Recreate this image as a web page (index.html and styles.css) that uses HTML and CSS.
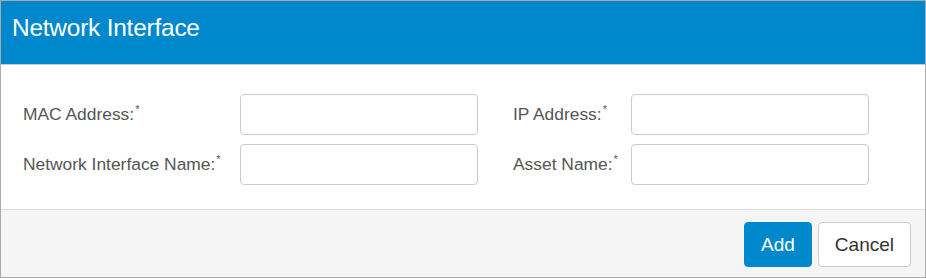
FILE: index.html
```html
<!DOCTYPE html>
<html lang="en">
<head>
<meta charset="UTF-8">
<title>Network Interface</title>
<link rel="stylesheet" href="styles.css">
</head>
<body>
<div class="dialog">
    <div class="dialog-header">
        <h2 class="dialog-title">Network Interface</h2>
    </div>
    <div class="dialog-body">
        <div class="form-grid">
            <label class="field-label" for="mac">MAC Address:<sup>*</sup></label>
            <input class="field-input" type="text" id="mac">
            <label class="field-label second" for="ip">IP Address:<sup>*</sup></label>
            <input class="field-input" type="text" id="ip">
            <label class="field-label" for="nic">Network Interface Name:<sup>*</sup></label>
            <input class="field-input" type="text" id="nic">
            <label class="field-label second" for="asset">Asset Name:<sup>*</sup></label>
            <input class="field-input" type="text" id="asset">
        </div>
    </div>
    <div class="dialog-footer">
        <button class="btn btn-primary">Add</button>
        <button class="btn btn-default">Cancel</button>
    </div>
</div>
</body>
</html>
```

FILE: styles.css
```css
body {
    margin: 0;
    font-family: "Liberation Sans", Arial, sans-serif;
    background-color: #fff;
}
.dialog {
    width: 924px;
    height: 276px;
    border: 1px solid #aaa;
    display: flex;
    flex-direction: column;
}
.dialog-header {
    height: 64px;
    box-sizing: border-box;
    background-color: #0088cc;
    border-bottom: 1px solid #ccc;
    display: flex;
    align-items: center;
    padding: 0 11px 9px;
}
.dialog-title {
    margin: 0;
    color: #fff;
    font-size: 24.4px;
    font-weight: normal;
    letter-spacing: -0.2px;
}
.dialog-body {
    height: 144px;
    padding: 29px 0 0 22px;
    box-sizing: border-box;
}
.form-grid {
    display: grid;
    grid-template-columns: 217px 238px 153px 238px;
    row-gap: 9px;
}
.field-label {
    color: #555;
    font-size: 17.4px;
    display: flex;
    align-items: center;
}
.field-label.second {
    padding-left: 35px;
}
.field-label sup {
    font-size: 11px;
    align-self: flex-start;
    margin-top: 9px;
    margin-left: 1px;
}
.field-input {
    height: 41px;
    box-sizing: border-box;
    border: 1px solid #ccc;
    border-radius: 4px;
    padding: 6px 12px;
    font-size: 15px;
}
.dialog-footer {
    flex: 1;
    background-color: #f5f5f5;
    border-top: 1px solid #ddd;
    display: flex;
    justify-content: flex-end;
    align-items: center;
    gap: 6px;
    padding: 2px 14px 0 0;
}
.btn {
    height: 45px;
    padding: 0 16px;
    font-family: "Liberation Sans", Arial, sans-serif;
    font-size: 19px;
    border-radius: 4px;
    cursor: pointer;
}
.btn-primary {
    background-color: #0088cc;
    border: 1px solid #0088cc;
    color: #fff;
}
.btn-default {
    background-color: #fff;
    border: 1px solid #ccc;
    color: #333;
}
```
